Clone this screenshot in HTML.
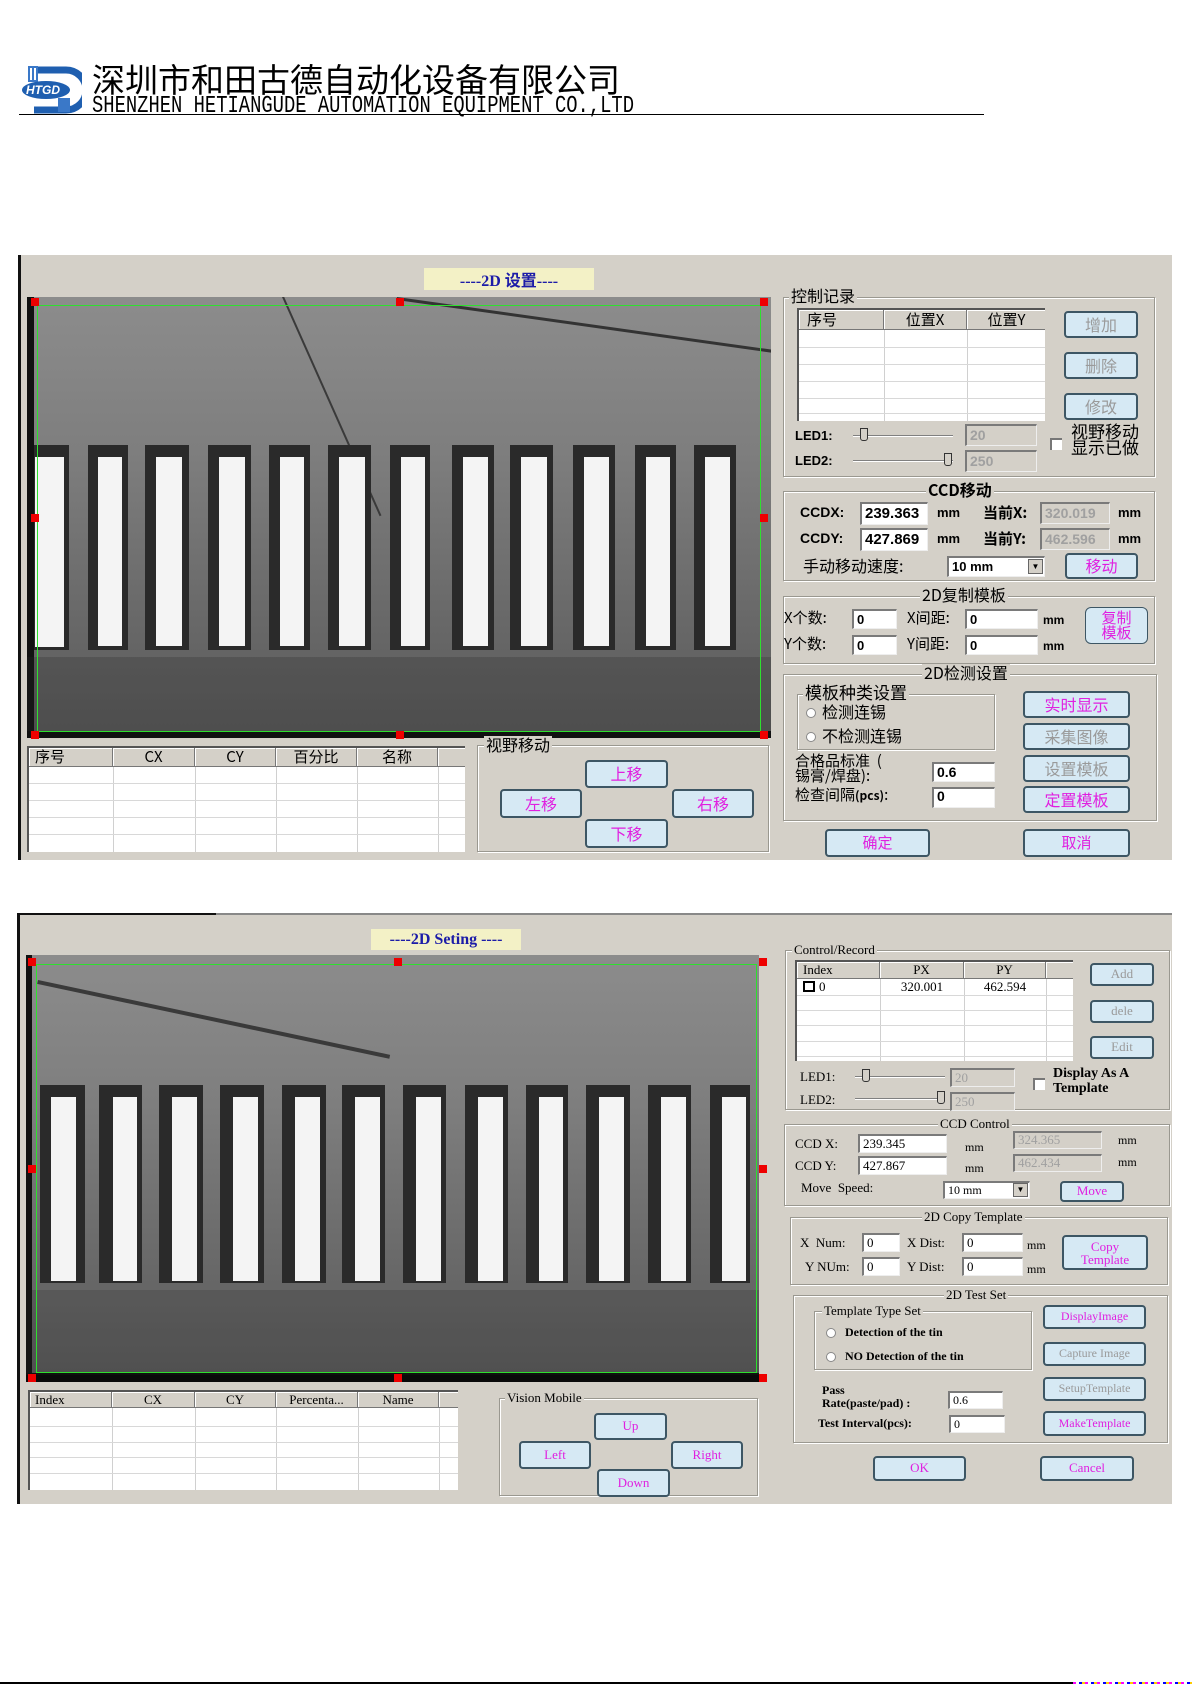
<!DOCTYPE html>
<html><head><meta charset="utf-8"><style>
*{margin:0;padding:0;box-sizing:border-box}
body{width:1192px;height:1685px;background:#fff;position:relative;overflow:hidden;font-family:"Liberation Sans","Noto Sans CJK SC",sans-serif;color:#000}
.a{position:absolute}
.pn{position:absolute;background:#d4d0c8}
.grp{position:absolute;border:1px solid #9a9890;box-shadow:inset 1px 1px 0 #fff,1px 1px 0 #fff}
.lg{position:absolute;background:#d4d0c8;padding:0 2px;white-space:nowrap;line-height:16px}
.btn{position:absolute;background:#d6e9f4;border:2px solid #3d5664;border-radius:4px;color:#e020e0;text-align:center;white-space:nowrap}
.dis{color:#9a9a9a}
.in{position:absolute;background:#fff;border-top:2px solid #7a7a7a;border-left:2px solid #7a7a7a;border-right:1px solid #eee;border-bottom:1px solid #eee;padding-left:3px;white-space:nowrap;overflow:hidden}
.gi{background:#d4d0c8;color:#a0a0a0}
.cn{font-family:"Noto Sans CJK SC",sans-serif}
.sf{font-family:"Liberation Serif",serif}
.img{position:absolute;background:linear-gradient(180deg,#8c8c8c 0%,#7e7e7e 35%,#6a6a6a 70%,#5a5a5a 100%);overflow:hidden}
.pad{position:absolute;background:#2a2a2a}
.pad i{position:absolute;background:#f4f4f4}
.rm{position:absolute;width:8px;height:8px;background:#e00}
.tbl{position:absolute;background:#fff;border-top:2px solid #555;border-left:2px solid #555;overflow:hidden}
.th{position:absolute;top:0;background:#d4d0c8;border-right:1px solid #777;border-bottom:1px solid #777;box-shadow:inset 1px 1px 0 #fff;text-align:center;white-space:nowrap}
.vl{position:absolute;width:1px;background:#d0d0d0}
.hl{position:absolute;height:1px;background:#d8d8d8;left:0;right:0}
.sl{position:absolute;height:2px;background:#808080;border-bottom:1px solid #fff}
.th2{position:absolute;width:8px;height:13px;background:#d4d0c8;border:1px solid #333;border-radius:0 0 3px 3px}
.cb{position:absolute;width:12px;height:12px;background:#fff;border-top:2px solid #777;border-left:2px solid #777}
.rd{position:absolute;width:10px;height:10px;border-radius:50%;background:#fff;border:1px solid #888}
</style></head><body>

<!-- Header -->
<svg class="a" style="left:20px;top:66px" width="62" height="48" viewBox="0 0 62 48">
<path d="M14 4 H46 A20 20 0 0 1 46 44 H14" fill="none" stroke="#1f5fb0" stroke-width="7"/>
<rect x="8" y="0" width="10" height="16" fill="#3a78c8"/><rect x="10" y="2" width="2" height="12" fill="#fff"/><rect x="14" y="2" width="2" height="12" fill="#fff"/>
<rect x="38" y="32" width="12" height="14" fill="#3a78c8"/>
<ellipse cx="26" cy="24" rx="24" ry="9" fill="#1f5fb0"/>
<text x="6" y="28" font-family="Liberation Sans" font-weight="bold" font-style="italic" font-size="12" fill="#fff">HTGD</text>
</svg>
<div class="a cn" style="left:92px;top:58px;font-size:33px;line-height:40px;letter-spacing:0;white-space:nowrap">深圳市和田古德自动化设备有限公司</div>
<div class="a" style="left:92px;top:98px;font-family:'Liberation Mono',monospace;font-size:24px;line-height:18px;transform:scaleX(0.784);transform-origin:0 0;white-space:nowrap">SHENZHEN HETIANGUDE AUTOMATION EQUIPMENT CO.,LTD</div>
<div class="a" style="left:19px;top:114px;width:965px;height:1px;background:#000"></div>

<!-- ===== Screenshot 1 ===== -->
<div class="pn" style="left:18px;top:255px;width:1154px;height:605px"></div>
<div class="a" style="left:18px;top:255px;width:3px;height:605px;background:#111"></div>
<div class="a sf" style="left:424px;top:268px;width:170px;height:22px;background:#f3f1c6;color:#1c1ca8;font-weight:bold;font-size:16px;line-height:22px;text-align:center">----2D <span class="cn">设置</span>----</div>

<div class="img" style="left:27px;top:297px;width:744px;height:441px">
 <div class="a" style="left:0;top:0;width:7px;height:441px;background:#111"></div>
 <div class="a" style="left:0;top:434px;width:744px;height:7px;background:#0a0a0a"></div>
 <div class="a" style="left:370px;top:0;width:400px;height:3px;background:#333;transform:rotate(8deg);transform-origin:0 0"></div>
 <div class="a" style="left:255px;top:0;width:2px;height:240px;background:#3a3a3a;transform:rotate(-24deg);transform-origin:0 0"></div>
 <div class="a" style="left:0;top:360px;width:744px;height:81px;background:rgba(40,40,40,.25)"></div>
</div>
<div class="pad" style="left:34px;top:445px;width:35px;height:205px"><i style="left:1px;top:12px;width:29px;height:190px"></i></div>
<div class="pad" style="left:88px;top:445px;width:40px;height:205px"><i style="left:10px;top:12px;width:24px;height:189px"></i></div>
<div class="pad" style="left:145px;top:445px;width:44px;height:205px"><i style="left:11px;top:12px;width:26px;height:189px"></i></div>
<div class="pad" style="left:208px;top:445px;width:43px;height:205px"><i style="left:11px;top:12px;width:26px;height:189px"></i></div>
<div class="pad" style="left:269px;top:445px;width:41px;height:205px"><i style="left:11px;top:12px;width:24px;height:189px"></i></div>
<div class="pad" style="left:328px;top:445px;width:43px;height:205px"><i style="left:11px;top:12px;width:26px;height:189px"></i></div>
<div class="pad" style="left:390px;top:445px;width:40px;height:205px"><i style="left:11px;top:12px;width:24px;height:189px"></i></div>
<div class="pad" style="left:452px;top:445px;width:42px;height:205px"><i style="left:11px;top:12px;width:25px;height:189px"></i></div>
<div class="pad" style="left:510px;top:445px;width:43px;height:205px"><i style="left:11px;top:12px;width:26px;height:189px"></i></div>
<div class="pad" style="left:573px;top:445px;width:42px;height:205px"><i style="left:11px;top:12px;width:25px;height:189px"></i></div>
<div class="pad" style="left:635px;top:445px;width:41px;height:205px"><i style="left:11px;top:12px;width:24px;height:189px"></i></div>
<div class="pad" style="left:694px;top:445px;width:42px;height:205px"><i style="left:11px;top:12px;width:25px;height:189px"></i></div>
<div class="a" style="left:37px;top:305px;width:724px;height:427px;border:1px solid #2ee02e"></div>
<div class="rm" style="left:31px;top:298px"></div><div class="rm" style="left:396px;top:298px"></div><div class="rm" style="left:760px;top:298px"></div>
<div class="rm" style="left:31px;top:514px"></div><div class="rm" style="left:760px;top:514px"></div>
<div class="rm" style="left:31px;top:731px"></div><div class="rm" style="left:396px;top:731px"></div><div class="rm" style="left:760px;top:731px"></div>

<div class="tbl cn" style="left:27px;top:746px;width:438px;height:106px;font-size:15px">
 <div class="th" style="left:0;width:84px;height:19px;line-height:18px;text-align:left;padding-left:6px">序号</div>
 <div class="th" style="left:84px;width:82px;height:19px;line-height:18px">CX</div>
 <div class="th" style="left:166px;width:81px;height:19px;line-height:18px">CY</div>
 <div class="th" style="left:247px;width:81px;height:19px;line-height:18px">百分比</div>
 <div class="th" style="left:328px;width:81px;height:19px;line-height:18px">名称</div>
 <div class="th" style="left:409px;width:40px;height:19px"></div>
 <div class="vl" style="left:84px;top:19px;height:90px"></div><div class="vl" style="left:166px;top:19px;height:90px"></div><div class="vl" style="left:247px;top:19px;height:90px"></div><div class="vl" style="left:328px;top:19px;height:90px"></div><div class="vl" style="left:409px;top:19px;height:90px"></div>
 <div class="hl" style="top:35px"></div><div class="hl" style="top:52px"></div><div class="hl" style="top:69px"></div><div class="hl" style="top:86px"></div>
</div>
<div class="grp" style="left:477px;top:745px;width:292px;height:107px"></div>
<div class="lg cn" style="left:484px;top:736px;font-size:16px">视野移动</div>
<div class="btn cn" style="left:585px;top:760px;width:83px;height:28px;font-size:16px;line-height:23px">上移</div>
<div class="btn cn" style="left:500px;top:789px;width:82px;height:29px;font-size:16px;line-height:24px">左移</div>
<div class="btn cn" style="left:672px;top:789px;width:82px;height:29px;font-size:16px;line-height:24px">右移</div>
<div class="btn cn" style="left:585px;top:819px;width:83px;height:29px;font-size:16px;line-height:24px">下移</div>

<div class="grp" style="left:783px;top:297px;width:372px;height:180px"></div>
<div class="lg cn" style="left:789px;top:287px;font-size:16px">控制记录</div>
<div class="tbl cn" style="left:797px;top:308px;width:248px;height:113px;font-size:15px">
 <div class="th" style="left:0;width:85px;height:20px;line-height:19px;text-align:left;padding-left:8px">序号</div>
 <div class="th" style="left:85px;width:83px;height:20px;line-height:19px">位置X</div>
 <div class="th" style="left:168px;width:80px;height:20px;line-height:19px">位置Y</div>
 <div class="vl" style="left:85px;top:20px;height:93px"></div><div class="vl" style="left:168px;top:20px;height:93px"></div>
 <div class="hl" style="top:37px"></div><div class="hl" style="top:54px"></div><div class="hl" style="top:71px"></div><div class="hl" style="top:88px"></div><div class="hl" style="top:103px"></div>
</div>
<div class="btn cn dis" style="left:1064px;top:311px;width:74px;height:27px;font-size:16px;line-height:22px">增加</div>
<div class="btn cn dis" style="left:1064px;top:352px;width:74px;height:27px;font-size:16px;line-height:22px">删除</div>
<div class="btn cn dis" style="left:1064px;top:393px;width:74px;height:27px;font-size:16px;line-height:22px">修改</div>
<div class="a" style="left:795px;top:428px;font-size:13px;font-weight:bold">LED1:</div>
<div class="sl" style="left:853px;top:435px;width:100px"></div><div class="th2" style="left:860px;top:428px"></div>
<div class="in gi" style="left:965px;top:424px;width:72px;height:22px;font-size:14px;line-height:18px;font-weight:bold">20</div>
<div class="a" style="left:795px;top:453px;font-size:13px;font-weight:bold">LED2:</div>
<div class="sl" style="left:853px;top:460px;width:100px"></div><div class="th2" style="left:944px;top:453px"></div>
<div class="in gi" style="left:965px;top:450px;width:72px;height:22px;font-size:14px;line-height:18px;font-weight:bold">250</div>
<div class="cb" style="left:1050px;top:438px"></div>
<div class="a cn" style="left:1071px;top:423px;font-size:17px;line-height:16px">视野移动<br>显示已做</div>

<div class="grp" style="left:783px;top:491px;width:372px;height:90px"></div>
<div class="lg cn" style="left:926px;top:481px;font-size:16px;font-weight:bold">CCD移动</div>
<div class="a" style="left:800px;top:504px;font-size:14px;font-weight:bold">CCDX:</div>
<div class="in" style="left:860px;top:502px;width:68px;height:23px;font-size:15px;line-height:20px;font-weight:bold">239.363</div>
<div class="a" style="left:937px;top:505px;font-size:13px;font-weight:bold">mm</div>
<div class="a cn" style="left:983px;top:502px;font-size:15px;font-weight:bold">当前X:</div>
<div class="in gi" style="left:1040px;top:502px;width:70px;height:22px;font-size:14px;line-height:19px;font-weight:bold">320.019</div>
<div class="a" style="left:1118px;top:505px;font-size:13px;font-weight:bold">mm</div>
<div class="a" style="left:800px;top:530px;font-size:14px;font-weight:bold">CCDY:</div>
<div class="in" style="left:860px;top:528px;width:68px;height:23px;font-size:15px;line-height:20px;font-weight:bold">427.869</div>
<div class="a" style="left:937px;top:531px;font-size:13px;font-weight:bold">mm</div>
<div class="a cn" style="left:983px;top:528px;font-size:15px;font-weight:bold">当前Y:</div>
<div class="in gi" style="left:1040px;top:528px;width:70px;height:22px;font-size:14px;line-height:19px;font-weight:bold">462.596</div>
<div class="a" style="left:1118px;top:531px;font-size:13px;font-weight:bold">mm</div>
<div class="a cn" style="left:803px;top:555px;font-size:16px;line-height:20px">手动移动速度:</div>
<div class="in" style="left:947px;top:556px;width:98px;height:21px;font-size:13px;line-height:18px;font-weight:bold">10 mm</div>
<div class="a" style="left:1028px;top:559px;width:15px;height:15px;background:#d4d0c8;border:1px solid #666;font-size:8px;text-align:center;line-height:13px">▼</div>
<div class="btn cn" style="left:1065px;top:553px;width:73px;height:26px;font-size:16px;line-height:21px">移动</div>

<div class="grp" style="left:783px;top:596px;width:372px;height:68px"></div>
<div class="lg cn" style="left:920px;top:586px;font-size:16px">2D复制模板</div>
<div class="a cn" style="left:784px;top:608px;font-size:15px;line-height:20px">X个数:</div>
<div class="in" style="left:852px;top:609px;width:45px;height:20px;font-size:13px;line-height:17px;font-weight:bold">0</div>
<div class="a cn" style="left:907px;top:608px;font-size:15px;line-height:20px">X间距:</div>
<div class="in" style="left:965px;top:609px;width:73px;height:20px;font-size:13px;line-height:17px;font-weight:bold">0</div>
<div class="a" style="left:1043px;top:613px;font-size:12px;font-weight:bold">mm</div>
<div class="a cn" style="left:784px;top:634px;font-size:15px;line-height:20px">Y个数:</div>
<div class="in" style="left:852px;top:635px;width:45px;height:20px;font-size:13px;line-height:17px;font-weight:bold">0</div>
<div class="a cn" style="left:907px;top:634px;font-size:15px;line-height:20px">Y间距:</div>
<div class="in" style="left:965px;top:635px;width:73px;height:20px;font-size:13px;line-height:17px;font-weight:bold">0</div>
<div class="a" style="left:1043px;top:639px;font-size:12px;font-weight:bold">mm</div>
<div class="btn cn" style="left:1085px;top:607px;width:63px;height:37px;font-size:15px;line-height:15px;padding-top:2px;border-width:1px;border-radius:6px">复制<br>模板</div>

<div class="grp" style="left:783px;top:674px;width:374px;height:147px"></div>
<div class="lg cn" style="left:922px;top:664px;font-size:16px">2D检测设置</div>
<div class="grp" style="left:797px;top:694px;width:198px;height:56px"></div>
<div class="lg cn" style="left:803px;top:684px;font-size:17px">模板种类设置</div>
<div class="rd" style="left:806px;top:708px"></div><div class="a cn" style="left:822px;top:702px;font-size:16px;line-height:18px">检测连锡</div>
<div class="rd" style="left:806px;top:732px"></div><div class="a cn" style="left:822px;top:726px;font-size:16px;line-height:18px">不检测连锡</div>
<div class="a cn" style="left:795px;top:753px;font-size:15px;line-height:15px;white-space:nowrap">合格品标准 &nbsp;(<br>锡膏/焊盘):</div>
<div class="in" style="left:932px;top:762px;width:63px;height:20px;font-size:14px;line-height:17px;font-weight:bold">0.6</div>
<div class="a cn" style="left:795px;top:785px;font-size:15px;line-height:20px">检查间隔<b style="font-size:12px">(pcs)</b>:</div>
<div class="in" style="left:932px;top:787px;width:63px;height:21px;font-size:14px;line-height:15px;font-weight:bold">0</div>
<div class="btn cn" style="left:1023px;top:691px;width:107px;height:27px;font-size:16px;line-height:22px">实时显示</div>
<div class="btn cn dis" style="left:1023px;top:723px;width:107px;height:27px;font-size:16px;line-height:22px">采集图像</div>
<div class="btn cn dis" style="left:1023px;top:755px;width:107px;height:27px;font-size:16px;line-height:22px">设置模板</div>
<div class="btn cn" style="left:1023px;top:786px;width:107px;height:27px;font-size:16px;line-height:22px">定置模板</div>
<div class="btn cn" style="left:825px;top:829px;width:105px;height:28px;font-size:15px;line-height:23px">确定</div>
<div class="btn cn" style="left:1023px;top:829px;width:107px;height:28px;font-size:15px;line-height:23px">取消</div>

<!-- ===== Screenshot 2 ===== -->
<div class="pn" style="left:18px;top:913px;width:1154px;height:591px;border-top:2px solid #888"></div>
<div class="a" style="left:18px;top:913px;width:198px;height:2px;background:#111"></div>
<div class="a" style="left:17px;top:913px;width:3px;height:591px;background:#111"></div>
<div class="a sf" style="left:371px;top:929px;width:150px;height:21px;background:#f3f1c6;color:#1c1ca8;font-weight:bold;font-size:16px;line-height:21px;text-align:center">----2D Seting ----</div>

<div class="img" style="left:26px;top:955px;width:733px;height:427px">
 <div class="a" style="left:0;top:0;width:6px;height:427px;background:#111"></div>
 <div class="a" style="left:0;top:418px;width:733px;height:9px;background:#0a0a0a"></div>
 <div class="a" style="left:12px;top:25px;width:360px;height:4px;background:#3a3a3a;transform:rotate(12deg);transform-origin:0 0"></div>
 <div class="a" style="left:0;top:335px;width:733px;height:85px;background:rgba(40,40,40,.2)"></div>
</div>
<div class="pad" style="left:40px;top:1085px;width:45px;height:198px"><i style="left:11px;top:12px;width:25px;height:184px"></i></div>
<div class="pad" style="left:99px;top:1085px;width:43px;height:198px"><i style="left:14px;top:12px;width:24px;height:184px"></i></div>
<div class="pad" style="left:159px;top:1085px;width:44px;height:198px"><i style="left:13px;top:12px;width:25px;height:184px"></i></div>
<div class="pad" style="left:220px;top:1085px;width:44px;height:198px"><i style="left:13px;top:12px;width:25px;height:184px"></i></div>
<div class="pad" style="left:282px;top:1085px;width:44px;height:198px"><i style="left:13px;top:12px;width:25px;height:184px"></i></div>
<div class="pad" style="left:342px;top:1085px;width:43px;height:198px"><i style="left:13px;top:12px;width:25px;height:184px"></i></div>
<div class="pad" style="left:403px;top:1085px;width:43px;height:198px"><i style="left:13px;top:12px;width:25px;height:184px"></i></div>
<div class="pad" style="left:465px;top:1085px;width:43px;height:198px"><i style="left:13px;top:12px;width:25px;height:184px"></i></div>
<div class="pad" style="left:526px;top:1085px;width:42px;height:198px"><i style="left:13px;top:12px;width:24px;height:184px"></i></div>
<div class="pad" style="left:586px;top:1085px;width:44px;height:198px"><i style="left:13px;top:12px;width:25px;height:184px"></i></div>
<div class="pad" style="left:648px;top:1085px;width:43px;height:198px"><i style="left:13px;top:12px;width:25px;height:184px"></i></div>
<div class="pad" style="left:710px;top:1085px;width:40px;height:198px"><i style="left:12px;top:12px;width:24px;height:184px"></i></div>
<div class="a" style="left:36px;top:964px;width:721px;height:409px;border:1px solid #2ee02e"></div>
<div class="rm" style="left:28px;top:958px"></div><div class="rm" style="left:394px;top:958px"></div><div class="rm" style="left:759px;top:958px"></div>
<div class="rm" style="left:28px;top:1165px"></div><div class="rm" style="left:759px;top:1165px"></div>
<div class="rm" style="left:28px;top:1374px"></div><div class="rm" style="left:394px;top:1374px"></div><div class="rm" style="left:759px;top:1374px"></div>

<div class="tbl sf" style="left:28px;top:1390px;width:430px;height:100px;font-size:13px">
 <div class="th" style="left:0;width:82px;height:16px;line-height:15px;text-align:left;padding-left:5px">Index</div>
 <div class="th" style="left:82px;width:83px;height:16px;line-height:15px">CX</div>
 <div class="th" style="left:165px;width:81px;height:16px;line-height:15px">CY</div>
 <div class="th" style="left:246px;width:82px;height:16px;line-height:15px">Percenta...</div>
 <div class="th" style="left:328px;width:81px;height:16px;line-height:15px">Name</div>
 <div class="th" style="left:409px;width:30px;height:16px"></div>
 <div class="vl" style="left:82px;top:16px;height:84px"></div><div class="vl" style="left:165px;top:16px;height:84px"></div><div class="vl" style="left:246px;top:16px;height:84px"></div><div class="vl" style="left:328px;top:16px;height:84px"></div><div class="vl" style="left:409px;top:16px;height:84px"></div>
 <div class="hl" style="top:34px"></div><div class="hl" style="top:50px"></div><div class="hl" style="top:65px"></div><div class="hl" style="top:81px"></div>
</div>
<div class="grp" style="left:499px;top:1398px;width:259px;height:98px"></div>
<div class="lg sf" style="left:505px;top:1390px;font-size:13px">Vision Mobile</div>
<div class="btn sf" style="left:594px;top:1413px;width:73px;height:27px;font-size:13px;line-height:22px">Up</div>
<div class="btn sf" style="left:519px;top:1441px;width:72px;height:28px;font-size:13px;line-height:23px">Left</div>
<div class="btn sf" style="left:671px;top:1441px;width:72px;height:28px;font-size:13px;line-height:23px">Right</div>
<div class="btn sf" style="left:597px;top:1469px;width:73px;height:28px;font-size:13px;line-height:23px">Down</div>

<div class="grp" style="left:785px;top:950px;width:385px;height:160px"></div>
<div class="lg sf" style="left:792px;top:942px;font-size:13px">Control/Record</div>
<div class="tbl sf" style="left:795px;top:960px;width:278px;height:101px;font-size:13px">
 <div class="th" style="left:0;width:83px;height:17px;line-height:16px;text-align:left;padding-left:6px">Index</div>
 <div class="th" style="left:83px;width:84px;height:17px;line-height:16px">PX</div>
 <div class="th" style="left:167px;width:82px;height:17px;line-height:16px">PY</div>
 <div class="th" style="left:249px;width:29px;height:17px"></div>
 <div class="a" style="left:6px;top:19px;width:12px;height:11px;border:2px solid #000"></div>
 <div class="a" style="left:22px;top:17px;line-height:15px">0</div>
 <div class="a" style="left:83px;top:17px;width:84px;text-align:center;line-height:15px">320.001</div>
 <div class="a" style="left:167px;top:17px;width:82px;text-align:center;line-height:15px">462.594</div>
 <div class="vl" style="left:83px;top:17px;height:84px"></div><div class="vl" style="left:167px;top:17px;height:84px"></div><div class="vl" style="left:249px;top:17px;height:84px"></div>
 <div class="hl" style="top:33px"></div><div class="hl" style="top:48px"></div><div class="hl" style="top:63px"></div><div class="hl" style="top:79px"></div><div class="hl" style="top:94px"></div>
</div>
<div class="btn sf dis" style="left:1090px;top:963px;width:64px;height:23px;font-size:13px;line-height:18px">Add</div>
<div class="btn sf dis" style="left:1090px;top:1000px;width:64px;height:23px;font-size:13px;line-height:18px">dele</div>
<div class="btn sf dis" style="left:1090px;top:1036px;width:64px;height:23px;font-size:13px;line-height:18px">Edit</div>
<div class="a sf" style="left:800px;top:1069px;font-size:13px">LED1:</div>
<div class="sl" style="left:855px;top:1076px;width:90px"></div><div class="th2" style="left:862px;top:1069px"></div>
<div class="in gi sf" style="left:950px;top:1068px;width:65px;height:19px;font-size:13px;line-height:16px">20</div>
<div class="a sf" style="left:800px;top:1092px;font-size:13px">LED2:</div>
<div class="sl" style="left:855px;top:1098px;width:90px"></div><div class="th2" style="left:937px;top:1091px"></div>
<div class="in gi sf" style="left:950px;top:1092px;width:65px;height:19px;font-size:13px;line-height:16px">250</div>
<div class="cb" style="left:1033px;top:1078px"></div>
<div class="a sf" style="left:1053px;top:1066px;font-size:14px;line-height:15px;font-weight:bold">Display As A<br>Template</div>

<div class="grp" style="left:784px;top:1124px;width:386px;height:82px"></div>
<div class="lg sf" style="left:938px;top:1116px;font-size:13px">CCD Control</div>
<div class="a sf" style="left:795px;top:1136px;font-size:13px">CCD X:</div>
<div class="in sf" style="left:858px;top:1134px;width:89px;height:19px;font-size:13px;line-height:16px">239.345</div>
<div class="a sf" style="left:965px;top:1140px;font-size:12px">mm</div>
<div class="in gi sf" style="left:1013px;top:1131px;width:89px;height:18px;font-size:13px;line-height:14px">324.365</div>
<div class="a sf" style="left:1118px;top:1133px;font-size:12px">mm</div>
<div class="a sf" style="left:795px;top:1158px;font-size:13px">CCD Y:</div>
<div class="in sf" style="left:858px;top:1156px;width:89px;height:19px;font-size:13px;line-height:16px">427.867</div>
<div class="a sf" style="left:965px;top:1161px;font-size:12px">mm</div>
<div class="in gi sf" style="left:1013px;top:1154px;width:89px;height:18px;font-size:13px;line-height:14px">462.434</div>
<div class="a sf" style="left:1118px;top:1155px;font-size:12px">mm</div>
<div class="a sf" style="left:801px;top:1180px;font-size:13px;white-space:pre">Move  Speed:</div>
<div class="in sf" style="left:943px;top:1181px;width:87px;height:18px;font-size:12px;line-height:15px">10 mm</div>
<div class="a" style="left:1013px;top:1183px;width:15px;height:14px;background:#d4d0c8;border:1px solid #666;font-size:8px;text-align:center;line-height:12px">▼</div>
<div class="btn sf" style="left:1060px;top:1181px;width:64px;height:21px;font-size:13px;line-height:16px">Move</div>

<div class="grp" style="left:790px;top:1217px;width:378px;height:68px"></div>
<div class="lg sf" style="left:922px;top:1209px;font-size:13px">2D Copy Template</div>
<div class="a sf" style="left:800px;top:1235px;font-size:13px">X &nbsp;Num:</div>
<div class="in sf" style="left:862px;top:1233px;width:38px;height:19px;font-size:13px;line-height:16px">0</div>
<div class="a sf" style="left:907px;top:1235px;font-size:13px">X Dist:</div>
<div class="in sf" style="left:962px;top:1233px;width:61px;height:19px;font-size:13px;line-height:16px">0</div>
<div class="a sf" style="left:1027px;top:1238px;font-size:12px">mm</div>
<div class="a sf" style="left:805px;top:1259px;font-size:13px">Y NUm:</div>
<div class="in sf" style="left:862px;top:1257px;width:38px;height:19px;font-size:13px;line-height:16px">0</div>
<div class="a sf" style="left:907px;top:1259px;font-size:13px">Y Dist:</div>
<div class="in sf" style="left:962px;top:1257px;width:61px;height:19px;font-size:13px;line-height:16px">0</div>
<div class="a sf" style="left:1027px;top:1262px;font-size:12px">mm</div>
<div class="btn sf" style="left:1062px;top:1235px;width:86px;height:35px;font-size:13px;line-height:13px;padding-top:3px">Copy<br>Template</div>

<div class="grp" style="left:793px;top:1295px;width:375px;height:148px"></div>
<div class="lg sf" style="left:944px;top:1287px;font-size:13px">2D Test Set</div>
<div class="grp" style="left:814px;top:1311px;width:218px;height:59px"></div>
<div class="lg sf" style="left:822px;top:1303px;font-size:13px">Template Type Set</div>
<div class="rd" style="left:826px;top:1328px"></div><div class="a sf" style="left:845px;top:1325px;font-size:12px;font-weight:bold">Detection of the tin</div>
<div class="rd" style="left:826px;top:1352px"></div><div class="a sf" style="left:845px;top:1349px;font-size:12px;font-weight:bold">NO Detection of the tin</div>
<div class="a sf" style="left:822px;top:1384px;font-size:12px;line-height:13px;font-weight:bold">Pass<br>Rate(paste/pad) :</div>
<div class="in sf" style="left:948px;top:1391px;width:55px;height:18px;font-size:12px;line-height:15px">0.6</div>
<div class="a sf" style="left:818px;top:1416px;font-size:12px;font-weight:bold">Test Interval(pcs):</div>
<div class="in sf" style="left:949px;top:1415px;width:56px;height:18px;font-size:12px;line-height:15px">0</div>
<div class="btn sf" style="left:1043px;top:1305px;width:103px;height:24px;font-size:12px;line-height:19px">DisplayImage</div>
<div class="btn sf dis" style="left:1043px;top:1342px;width:103px;height:24px;font-size:12px;line-height:19px">Capture Image</div>
<div class="btn sf dis" style="left:1043px;top:1377px;width:103px;height:24px;font-size:12px;line-height:19px">SetupTemplate</div>
<div class="btn sf" style="left:1043px;top:1411px;width:103px;height:25px;font-size:12px;line-height:20px">MakeTemplate</div>
<div class="btn sf" style="left:873px;top:1456px;width:93px;height:25px;font-size:13px;line-height:20px">OK</div>
<div class="btn sf" style="left:1040px;top:1456px;width:94px;height:25px;font-size:13px;line-height:20px">Cancel</div>

<div class="a" style="left:0;top:1682px;width:1073px;height:2px;background:#000"></div>
<div class="a" style="left:1073px;top:1682px;width:119px;height:2px;background:repeating-linear-gradient(90deg,#f0f 0 3px,#fff 3px 6px,#00f 6px 9px,#fc0 9px 12px)"></div>
</body></html>
